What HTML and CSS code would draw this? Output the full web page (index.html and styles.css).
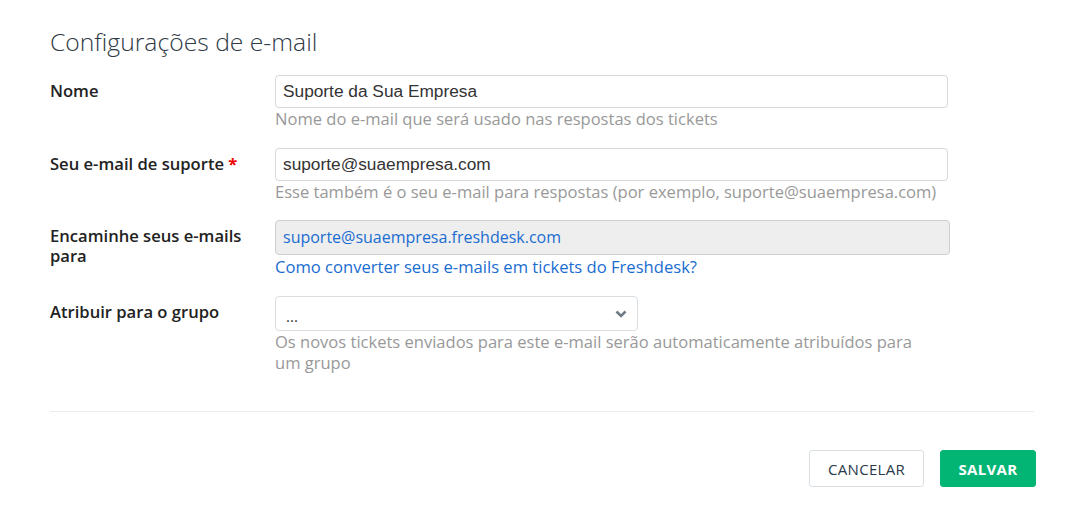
FILE: index.html
```html
<!DOCTYPE html>
<html lang="pt">
<head>
<meta charset="utf-8">
<title>Configurações de e-mail</title>
<link rel="stylesheet" href="styles.css">
</head>
<body>
<div class="page">
  <h1 class="title">Configurações de e-mail</h1>
  <div class="form">
    <div class="row">
      <label class="label">Nome</label>
      <div class="field">
        <div class="input">Suporte da Sua Empresa</div>
        <div class="help">Nome do e-mail que será usado nas respostas dos tickets</div>
      </div>
    </div>
    <div class="row row-tight">
      <label class="label">Seu e-mail de suporte <span class="req">*</span></label>
      <div class="field">
        <div class="input">suporte@suaempresa.com</div>
        <div class="help">Esse também é o seu e-mail para respostas (por exemplo, suporte@suaempresa.com)</div>
      </div>
    </div>
    <div class="row">
      <label class="label label-wrap">Encaminhe seus e-mails para</label>
      <div class="field">
        <div class="input readonly">suporte@suaempresa.freshdesk.com</div>
        <a class="link" href="#">Como converter seus e-mails em tickets do Freshdesk?</a>
      </div>
    </div>
    <div class="row">
      <label class="label">Atribuir para o grupo</label>
      <div class="field">
        <div class="select">
          <span class="select-value">...</span>
          <svg class="chev" width="12" height="8" viewBox="0 0 12 8"><path d="M1.5 1.5 L6 6 L10.5 1.5" fill="none" stroke="#6f7c87" stroke-width="2.6"/></svg>
        </div>
        <div class="help help-narrow">Os novos tickets enviados para este e-mail serão automaticamente atribuídos para um grupo</div>
      </div>
    </div>
  </div>
  <div class="divider"></div>
  <div class="actions">
    <button class="btn btn-cancel">CANCELAR</button>
    <button class="btn btn-save">SALVAR</button>
  </div>
</div>
</body>
</html>
```
FILE: styles.css
```css
html, body {
  margin: 0;
  padding: 0;
  background: #ffffff;
}
.page {
  width: 984px;
  padding: 26px 0 0 50px;
  font-family: "Open Sans", "Noto Sans", sans-serif;
  color: #333;
}
.title {
  margin: 0;
  font-family: "Open Sans", sans-serif;
  font-weight: 300;
  font-size: 24.7px;
  line-height: 32px;
  color: #2f3a45;
}
.form {
  margin-top: 17px;
  display: flex;
  flex-direction: column;
}
.row {
  display: flex;
  align-items: flex-start;
  margin-bottom: 19px;
}
.row-tight {
  margin-bottom: 18px;
}
.label {
  width: 225px;
  flex: none;
  font-family: "Open Sans", sans-serif;
  font-weight: 600;
  font-size: 16.6px;
  line-height: 20px;
  color: #222;
  padding-top: 6px;
}
.label-wrap {
  width: 200px;
  padding-right: 25px;
}
.req {
  color: #e00;
  font-weight: 700;
}
.field {
  width: 675px;
  display: flex;
  flex-direction: column;
}
.input {
  box-sizing: border-box;
  width: 673px;
  height: 33px;
  border: 1px solid #d4d8db;
  border-radius: 4px;
  padding: 0 7px;
  font-family: "Liberation Sans", Arial, sans-serif;
  font-size: 17.3px;
  line-height: 31px;
  color: #333;
}
.input.readonly {
  width: 675px;
  height: 35px;
  line-height: 33px;
  background: #eeeeee;
  border-color: #cfcfcf;
  font-family: "Open Sans", sans-serif;
  font-size: 16px;
  color: #1a6dd1;
}
.help {
  margin-top: 0;
  font-size: 16.55px;
  line-height: 21px;
  color: #999;
}
.help-narrow {
  width: 650px;
}
.link {
  margin-top: 1px;
  font-size: 16.6px;
  line-height: 21px;
  color: #1a6dd1;
  text-decoration: none;
}
.select {
  box-sizing: border-box;
  width: 363px;
  height: 35px;
  border: 1px solid #dadfe3;
  border-radius: 4px;
  display: flex;
  align-items: center;
  justify-content: space-between;
  padding: 0 10px 0 10px;
}
.select-value {
  font-size: 15px;
  color: #333;
  padding-top: 4px;
}
.chev {
  display: block;
}
.divider {
  margin-top: 19px;
  height: 1px;
  background: #ebebeb;
  width: 984px;
}
.actions {
  margin-top: 38px;
  display: flex;
  justify-content: flex-end;
  gap: 16px;
  width: 986px;
}
.btn {
  height: 37px;
  border-radius: 3px;
  font-family: "Open Sans", sans-serif;
  font-size: 15px;
  cursor: pointer;
}
.btn-cancel {
  width: 115px;
  background: #fff;
  border: 1px solid #dadfe3;
  color: #2b3a4a;
  letter-spacing: 0.3px;
}
.btn-save {
  width: 96px;
  background: #02b574;
  border: 1px solid #02b574;
  color: #fff;
  font-weight: 700;
  letter-spacing: 0.3px;
}
```
